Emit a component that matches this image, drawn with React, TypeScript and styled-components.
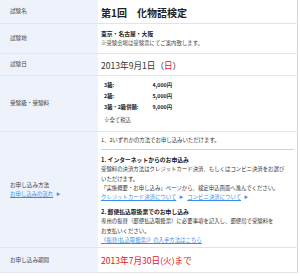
import React from "react";
import styled, { createGlobalStyle } from "styled-components";

const Global = createGlobalStyle`
  html, body { margin: 0; padding: 0; background: #ffffff; }
  body { font-family: "Noto Sans CJK JP", "Noto Sans", sans-serif; color: #333; }
`;

const Table = styled.div`
  width: 297px;
  border-right: 1px solid #d6d6d6;
  display: grid;
  grid-template-columns: 98px 1fr;
`;

const Label = styled.div<{ $h: number }>`
  height: ${(p) => p.$h}px;
  box-sizing: border-box;
  background: #eef2fb;
  border-bottom: 1px solid #e2e6ee;
  padding-left: 10px;
  display: flex;
  flex-direction: column;
  justify-content: center;
  font-size: 5.6px;
  line-height: 9px;
  color: #444;
`;

const Value = styled.div<{ $h: number; $top?: number }>`
  height: ${(p) => p.$h}px;
  box-sizing: border-box;
  border-bottom: 1px solid #e4e4e4;
  padding: ${(p) => (p.$top !== undefined ? `${p.$top}px 4px 0 3px` : "0 4px 0 3px")};
  display: flex;
  flex-direction: column;
  justify-content: ${(p) => (p.$top !== undefined ? "flex-start" : "center")};
  font-size: 5.6px;
  line-height: 9px;
`;

const Title = styled.div`
  font-size: 10px;
  font-weight: 700;
  line-height: 14px;
  color: #222;
  padding-top: 2px;
`;

const Strong = styled.div`
  font-weight: 700;
  font-size: 5.8px;
  line-height: 10px;
  color: #222;
`;

const Note = styled.div`
  font-size: 5.4px;
  line-height: 9px;
  color: #444;
`;

const DateText = styled.div<{ $red?: boolean }>`
  font-size: 8.6px;
  line-height: 12px;
  color: ${(p) => (p.$red ? "#e8101a" : "#333")};
`;

const Red = styled.span`
  color: #e8101a;
`;

const FeeGrid = styled.div`
  display: grid;
  grid-template-columns: 44px 24px;
  margin-left: 3px;
  font-weight: 700;
  font-size: 5.3px;
  line-height: 11px;
  color: #222;
`;

const FeeValue = styled.span`
  text-align: right;
`;

const FeeNote = styled.div`
  margin: 3px 0 0 3px;
  font-size: 5.4px;
  line-height: 9px;
  color: #444;
`;

const Divider = styled.div`
  height: 1px;
  background: #d2d2d2;
  margin: 4px 0 0 0;
  width: 193px;
`;

const Section = styled.div<{ $gap: number }>`
  margin-top: ${(p) => p.$gap}px;
`;

const Line = styled.div`
  font-size: 5.4px;
  line-height: 9.3px;
  color: #333;
  white-space: nowrap;
`;

const Link = styled.a`
  color: #3a8ee8;
  text-decoration: underline;
  font-size: 5.4px;
`;

const Arrow = styled.span`
  color: #3a8ee8;
  font-size: 4px;
  margin: 0 4px 0 3px;
  display: inline-block;
`;

export default function App() {
  return (
    <>
      <Global />
      <Table>
        <Label $h={24}>試験名</Label>
        <Value $h={24}>
          <Title>第1回　化物語検定</Title>
        </Value>

        <Label $h={30}>試験地</Label>
        <Value $h={30}>
          <Strong>東京・名古屋・大阪</Strong>
          <Note>※受験会場は受験票にてご案内致します。</Note>
        </Value>

        <Label $h={22}>試験日</Label>
        <Value $h={22}>
          <DateText>
            2013年9月1日（<Red>日</Red>）
          </DateText>
        </Value>

        <Label $h={56}>受験級・受験料</Label>
        <Value $h={56} $top={4}>
          <FeeGrid>
            <span>3級:</span>
            <FeeValue>4,000円</FeeValue>
            <span>2級:</span>
            <FeeValue>5,000円</FeeValue>
            <span>3級・2級併願:</span>
            <FeeValue>9,000円</FeeValue>
          </FeeGrid>
          <FeeNote>※全て税込</FeeNote>
        </Value>

        <Label $h={116}>
          <div>お申し込み方法</div>
          <div>
            <Link href="#">お申し込みの流れ</Link>
            <Arrow>▶</Arrow>
          </div>
        </Label>
        <Value $h={116} $top={4}>
          <Line>1、2いずれかの方法でお申し込みいただけます。</Line>
          <Divider />
          <Section $gap={5}>
            <Strong>1. インターネットからのお申込み</Strong>
            <Line>受験料の決済方法はクレジットカード決済、もしくはコンビニ決済をお選び</Line>
            <Line>いただけます。</Line>
            <Line>「実施概要・お申し込み」ページから、検定申込画面へ進んでください。</Line>
            <Line>
              <Link href="#">クレジットカード決済について</Link>
              <Arrow>▶</Arrow>
              <Link href="#">コンビニ決済について</Link>
              <Arrow>▶</Arrow>
            </Line>
          </Section>
          <Section $gap={5}>
            <Strong>2. 郵便払込取扱票でのお申し込み</Strong>
            <Line>専用の振替（郵便払込取扱票）に必要事項を記入し、郵便局で受験料を</Line>
            <Line>お支払いください。</Line>
            <Line>
              <Link href="#">《振替(払込取扱票)》の入手方法はこちら</Link>
            </Line>
          </Section>
        </Value>

        <Label $h={25}>お申し込み期間</Label>
        <Value $h={25}>
          <DateText $red>2013年7月30日(火)まで</DateText>
        </Value>
      </Table>
    </>
  );
}
